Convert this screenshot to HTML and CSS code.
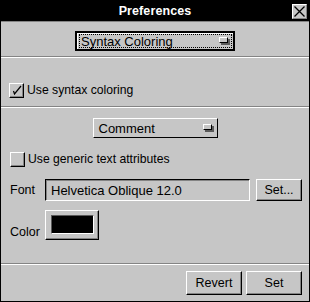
FILE: index.html
```html
<!DOCTYPE html>
<html lang="en">
<head>
  <meta charset="UTF-8" />
  <title>Preferences</title>
  <link rel="stylesheet" href="styles.css">
</head>
<body>
  <div class="window">
    <div class="titlebar">
      <span class="title">Preferences</span>
      <span class="close-box">
        <svg width="13" height="13" viewBox="0 0 13 13"><path d="M1.5 1.5 L11.5 11.5 M11.5 1.5 L1.5 11.5" stroke="#000" stroke-width="1.3" fill="none"/></svg>
      </span>
    </div>

    <div class="section section-top">
      <div class="popup popup-default">
        <div class="focus-ring">
          <span class="popup-label">Syntax Coloring</span>
          <span class="indicator"></span>
        </div>
      </div>
    </div>
    <div class="separator"></div>

    <div class="section section-check">
      <label class="check-row">
        <span class="checkbox">
          <svg width="12" height="12" viewBox="0 0 12 12"><path d="M2.5 7 L3.5 10 L10 2" stroke="#000" stroke-width="1.2" fill="none"/></svg>
        </span>
        <span>Use syntax coloring</span>
      </label>
    </div>
    <div class="separator"></div>

    <div class="section section-attrs">
      <div class="popup popup-comment">
        <span class="popup-label">Comment</span>
        <span class="indicator"></span>
      </div>
      <label class="check-row generic">
        <span class="checkbox"></span>
        <span>Use generic text attributes</span>
      </label>
      <div class="field-row font-row">
        <span class="field-label">Font</span>
        <div class="text-field">Helvetica Oblique 12.0</div>
        <button class="btn btn-small">Set...</button>
      </div>
      <div class="field-row color-row">
        <span class="field-label">Color</span>
        <div class="color-well"><span class="swatch"></span></div>
      </div>
    </div>
    <div class="separator"></div>

    <div class="section section-buttons">
      <button class="btn btn-action">Revert</button>
      <button class="btn btn-action">Set</button>
    </div>
  </div>
</body>
</html>
```

FILE: styles.css
```css
* {
  margin: 0;
  padding: 0;
  box-sizing: border-box;
}
body {
  font-family: 'Liberation Sans', Arial, sans-serif;
  font-size: 12.3px;
  color: #000;
  background: #c6c6c6;
}
.window {
  width: 310px;
  height: 302px;
  background: #c6c6c6;
  border: 1px solid #000;
  border-top: none;
}
.titlebar {
  height: 22px;
  background: #000;
  display: flex;
  align-items: center;
  justify-content: center;
  position: relative;
  border-bottom: 1px solid #848484;
}
.title {
  color: #fff;
  font-weight: bold;
  font-size: 12.5px;
  letter-spacing: 0.1px;
}
.close-box {
  position: absolute;
  right: 2px;
  top: 4px;
  width: 15px;
  height: 15px;
  background: #c6c6c6;
  border: 1px solid;
  border-color: #fff #848484 #848484 #fff;
  display: flex;
  align-items: center;
  justify-content: center;
}
.close-box svg {
  display: block;
}
.section {
  display: flex;
  flex-direction: column;
}
.separator {
  height: 2px;
  border-top: 1px solid #848484;
  border-bottom: 1px solid #fff;
}
.section-top {
  height: 34px;
  align-items: center;
  padding-top: 9px;
}
.section-check {
  height: 48px;
  padding-top: 25px;
  padding-left: 8px;
}
.section-attrs {
  height: 155px;
  padding: 10px 7px 0 8px;
}
.section-buttons {
  height: 35px;
  flex-direction: row;
  justify-content: flex-end;
  gap: 4px;
  padding: 6px 7px 0 0;
}

/* popup menus */
.popup {
  display: flex;
  align-items: center;
  background: #c6c6c6;
  height: 20px;
}
.popup-default {
  width: 160px;
  border: 2px solid #000;
  padding: 1px 1px 1px 2px;
  box-shadow: inset 1px 1px 0 #fff;
}
.focus-ring {
  flex: 1;
  height: 100%;
  border: 1px dotted #000;
  display: flex;
  align-items: center;
  justify-content: space-between;
  padding: 0 3px 0 1px;
}
.popup-comment {
  width: 125px;
  align-self: center;
  margin-left: -1px;
  border: 1px solid;
  border-color: #fff #000 #000 #fff;
  justify-content: space-between;
  padding: 0 5px 0 5px;
}
.popup-label {
  line-height: 1;
  font-size: 13px;
}
.indicator {
  width: 9px;
  height: 6px;
  background: #c6c6c6;
  border: 1px solid;
  border-color: #fff #000 #000 #fff;
  box-shadow: 2px 2px 0 #5a5a5a;
  margin-bottom: 2px;
}

/* checkboxes */
.check-row {
  display: flex;
  align-items: center;
  gap: 3px;
  height: 14px;
  font-size: 12.2px;
}
.checkbox {
  width: 15px;
  height: 15px;
  background: #c6c6c6;
  border: 1px solid;
  border-color: #fff #000 #000 #fff;
  box-shadow: inset -1px -1px 0 #848484;
  display: flex;
  align-items: center;
  justify-content: center;
}
.checkbox svg {
  display: block;
}
.generic {
  margin-top: 14px;
  margin-left: 1px;
}

/* fields */
.field-row {
  display: flex;
  align-items: center;
}
.field-label {
  width: 37px;
  font-size: 12.5px;
  padding-left: 1px;
}
.font-row {
  margin-top: 13px;
  height: 22px;
}
.text-field {
  width: 205px;
  height: 22px;
  border: 1px solid;
  border-color: #000 #fff #fff #000;
  box-shadow: inset 1px 1px 0 #848484;
  padding: 0 5px;
  display: flex;
  align-items: center;
  font-size: 13px;
  margin-left: -1px;
}
.btn {
  font-family: inherit;
  font-size: 12.5px;
  color: #000;
  background: #c6c6c6;
  border: 1px solid;
  border-color: #fff #000 #000 #fff;
  box-shadow: inset -1px -1px 0 #848484;
  cursor: pointer;
}
.btn-small {
  width: 46px;
  height: 22px;
  margin-left: auto;
}
.color-row {
  margin-top: 9px;
  height: 30px;
  align-items: flex-end;
}
.color-row .field-label {
  padding-bottom: 1px;
}
.color-well {
  width: 54px;
  height: 30px;
  margin-left: -1px;
  border: 1px solid;
  border-color: #fff #000 #000 #fff;
  box-shadow: inset -1px -1px 0 #848484;
  padding: 4px 0 0 5px;
}
.swatch {
  display: block;
  width: 43px;
  height: 19px;
  background: #000;
  border: 1px solid;
  border-color: #5a5a5a #fff #fff #5a5a5a;
}
.btn-action {
  width: 56px;
  height: 24px;
}
```
